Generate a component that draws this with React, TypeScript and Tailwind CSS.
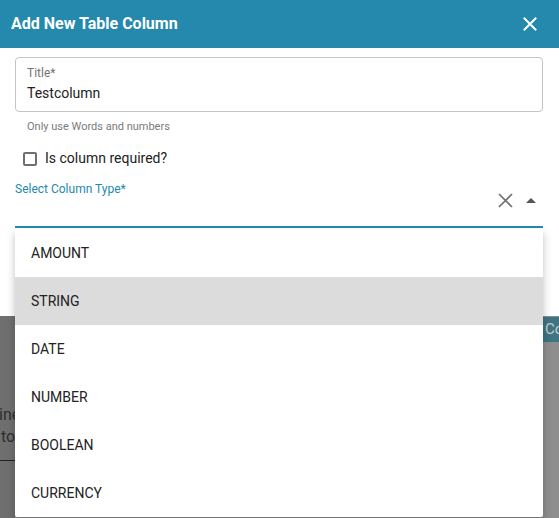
import React from "react";

const items = ["AMOUNT", "STRING", "DATE", "NUMBER", "BOOLEAN", "CURRENCY"];

export default function App() {
  return (
    <div
      className="relative w-[559px] h-[518px] overflow-hidden bg-[#8e8e8e]"
      style={{ fontFamily: "Roboto, 'Liberation Sans', sans-serif" }}
    >
      {/* backdrop content */}
      <div className="absolute left-0 top-[316px] w-[15px] h-[202px] bg-[#6f6f6f] overflow-hidden">
        <div className="mt-[88px] text-[16px] leading-[22px] text-[#2e2e2e] whitespace-nowrap">
          <div className="-ml-[1px]">ine</div>
          <div className="ml-[1px]">to</div>
        </div>
        <div className="mt-[12px] h-px bg-[#222]" />
      </div>
      <div className="absolute left-[543px] top-[317px] w-[40px] h-[25px] bg-[#3f7483] overflow-hidden">
        <div className="pl-[2px] pt-[1px] text-[15px] text-[#c3cdd0] whitespace-nowrap">Co</div>
      </div>

      {/* dialog */}
      <div className="absolute left-0 top-0 w-[559px] h-[316px] bg-white">
        <div className="h-[48px] bg-[#2589ae] flex items-center justify-between pl-[11px] pr-[22px]">
          <span className="text-white font-bold text-[16px]">Add New Table Column</span>
          <svg width="14" height="14" viewBox="0 0 14 14" fill="none">
            <path d="M0.8 0.8L13.2 13.2M13.2 0.8L0.8 13.2" stroke="white" strokeWidth="2" />
          </svg>
        </div>
        <div className="px-[15px] pt-[9px] w-[559px]">
          <div className="w-[528px] h-[55px] border border-[#c4c4c4] rounded-[4px] px-[11px] pt-[8px]">
            <div className="text-[12px] leading-[14px] text-[#757575]">Title*</div>
            <div className="text-[14px] leading-[20px] mt-[3px] text-[#222]">Testcolumn</div>
          </div>
          <div className="pl-[12px] mt-[8px] text-[11px] leading-[14px] text-[#7a7a7a]">Only use Words and numbers</div>
          <div className="flex items-center mt-[14px] pl-[8px]">
            <div className="w-[14px] h-[14px] border-2 border-[#6f6f6f] rounded-[2px]" />
            <span className="ml-[8px] text-[14px] text-[#222]">Is column required?</span>
          </div>
          <div className="mt-[13px] w-[528px] h-[46px] border-b-2 border-[#2589ae] flex justify-between items-start">
            <div className="text-[12px] leading-[14px] text-[#2589ae]">Select Column Type*</div>
            <div className="flex items-center mt-[11px] pr-[7px]">
              <svg width="15" height="15" viewBox="0 0 15 15" fill="none" className="mr-[13px]">
                <path d="M1 1L14 14M14 1L1 14" stroke="#707070" strokeWidth="1.7" />
              </svg>
              <svg width="10" height="5" viewBox="0 0 10 5">
                <path d="M0 5L5 0L10 5Z" fill="#555" />
              </svg>
            </div>
          </div>
        </div>
      </div>

      {/* dropdown menu */}
      <div className="absolute left-[15px] top-[229px] w-[528px] bg-white shadow-[0_4px_8px_rgba(0,0,0,0.25)] rounded-b-[2px]">
        {items.map((it) => (
          <div
            key={it}
            className={`h-[48px] flex items-center pl-[16px] text-[14px] text-[#222] ${it === "STRING" ? "bg-[#dcdcdc]" : ""}`}
          >
            {it}
          </div>
        ))}
      </div>
    </div>
  );
}
